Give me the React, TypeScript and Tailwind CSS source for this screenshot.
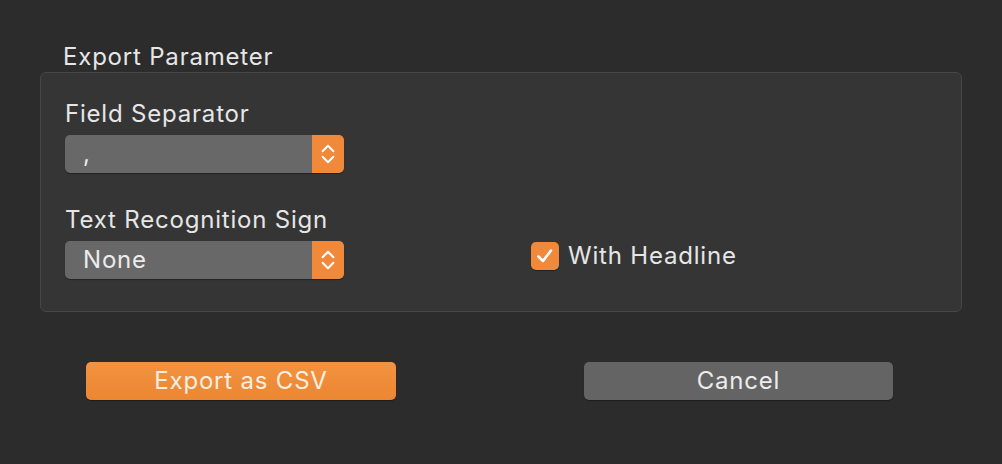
import React from "react";

function Stepper() {
  return (
    <div className="flex w-[32px] items-center justify-center self-stretch rounded-r-[5px] bg-[#f0893a]">
      <svg width="14" height="24" viewBox="0 0 14 24" fill="none" stroke="#fff" strokeWidth="2" strokeLinecap="round" strokeLinejoin="round">
        <path d="M1.6 9.2 7 3.8 12.4 9.2" />
        <path d="M1.6 14.8 7 20.2 12.4 14.8" />
      </svg>
    </div>
  );
}

function Select({ value }: { value: string }) {
  return (
    <div className="flex h-[38px] w-[279px] overflow-hidden rounded-[5px] bg-[#686868] shadow-[0_1px_1px_rgba(0,0,0,0.35)]">
      <div className="flex flex-1 items-center pl-[18px] text-[24px] tracking-[0.8px] text-[#ececec]">{value}</div>
      <Stepper />
    </div>
  );
}

export default function App() {
  return (
    <div
      className="flex h-[464px] w-[1002px] flex-col bg-[#2c2c2c] text-[#e6e6e6]"
      style={{ fontFamily: "Inter, 'Liberation Sans', sans-serif" }}
    >
      <div className="ml-[63px] mt-[42px] text-[24px] leading-[30px] tracking-[0.8px]">Export Parameter</div>

      <div className="mx-[40px] flex h-[240px] rounded-[6px] border border-[#474747] bg-[#353535] pl-[24px] pt-[25px]">
        <div className="flex w-[466px] flex-col">
          <div className="text-[24px] leading-[32px] tracking-[0.8px]">Field Separator</div>
          <div className="mt-[5px]">
            <Select value="," />
          </div>
          <div className="mt-[31px] text-[24px] leading-[32px] tracking-[0.8px]">Text Recognition Sign</div>
          <div className="mt-[5px]">
            <Select value="None" />
          </div>
        </div>
        <div className="mt-[144px] flex h-[28px] items-center gap-[9px] self-start">
          <div className="flex h-[28px] w-[28px] items-center justify-center rounded-[5px] bg-[#f0893a] shadow-[0_1px_1px_rgba(0,0,0,0.35)]">
            <svg width="20" height="20" viewBox="0 0 20 20" fill="none" stroke="#fff" strokeWidth="2.6" strokeLinecap="round" strokeLinejoin="round">
              <path d="M3.5 10.5 8 15 16 4.5" />
            </svg>
          </div>
          <span className="text-[24px] tracking-[0.8px]">With Headline</span>
        </div>
      </div>

      <div className="mt-[50px] flex">
        <button className="ml-[86px] h-[38px] w-[310px] rounded-[5px] bg-[linear-gradient(#f29340,#ec8632)] text-[24px] tracking-[0.8px] text-[#fbeee2] shadow-[0_1px_1px_rgba(0,0,0,0.35)]">
          Export as CSV
        </button>
        <button className="ml-[188px] h-[38px] w-[309px] rounded-[5px] bg-[#646464] text-[24px] tracking-[0.8px] text-[#ececec] shadow-[0_1px_1px_rgba(0,0,0,0.35)]">
          Cancel
        </button>
      </div>
    </div>
  );
}
